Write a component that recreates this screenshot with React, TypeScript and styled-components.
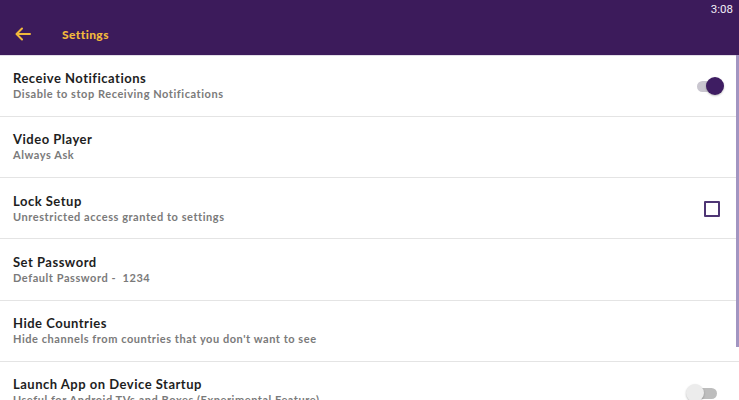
import React from "react"
import styled, { createGlobalStyle } from "styled-components"

const GlobalStyle = createGlobalStyle`
  html, body {
    margin: 0;
    padding: 0;
    background: #ffffff;
    font-family: "Lato", "Noto Sans", sans-serif;
  }
  #root {
    width: 739px;
    height: 400px;
    overflow: hidden;
  }
`

const Screen = styled.div`
  position: relative;
  width: 739px;
  height: 400px;
  overflow: hidden;
  background: #ffffff;
`

const AppBar = styled.header`
  height: 55.5px;
  background: #3c1b5b;
  display: flex;
  flex-direction: column;
  box-sizing: border-box;
  border-bottom: 1px solid #e2dde8;
`

const StatusBar = styled.div`
  height: 18px;
  display: flex;
  justify-content: flex-end;
  align-items: center;
  padding-right: 6px;
  color: #f2eef7;
  font-size: 11.5px;
  font-family: "Roboto", sans-serif;
`

const TitleBar = styled.div`
  flex: 1;
  display: flex;
  align-items: center;
  padding-left: 15px;
  gap: 17px;
  padding-bottom: 4px;
`

const BackButton = styled.span`
  display: flex;
  align-items: center;
  width: 30px;
`

const Title = styled.h1`
  margin: 0;
  color: #f2b93b;
  font-size: 12px;
  font-weight: 900;
  letter-spacing: 0.4px;
`

const List = styled.div`
  display: flex;
  flex-direction: column;
`

const Row = styled.div`
  height: 61.25px;
  flex-shrink: 0;
  box-sizing: border-box;
  border-bottom: 1px solid #e4e4e4;
  display: flex;
  align-items: center;
  padding: 1px 16px 0 13px;
`

const Texts = styled.div`
  flex: 1;
  display: flex;
  flex-direction: column;
`

const RowTitle = styled.div`
  color: #1e1e1e;
  font-size: 13px;
  font-weight: 700;
  line-height: 16px;
  letter-spacing: 0.5px;
  white-space: nowrap;
`

const RowSub = styled.div`
  color: #7a7a7a;
  font-size: 11px;
  font-weight: 700;
  line-height: 16px;
  letter-spacing: 0.55px;
  white-space: pre;
`

const Track = styled.div<{ $on: boolean }>`
  position: relative;
  width: 24px;
  height: 11px;
  border-radius: 6px;
  background: ${(p) => (p.$on ? "#c9c6cf" : "#bdbdbd")};
  margin-right: ${(p) => (p.$on ? "2px" : "6px")};
  margin-top: ${(p) => (p.$on ? "0" : "3px")};
`

const Thumb = styled.div<{ $on: boolean }>`
  position: absolute;
  top: -4px;
  ${(p) => (p.$on ? "right: -3px;" : "left: -7px;")}
  width: 18px;
  height: 18px;
  border-radius: 50%;
  background: ${(p) => (p.$on ? "#3e1d62" : "#ececec")};
  box-shadow: 0 1px 2px rgba(0, 0, 0, 0.25);
`

const CheckBox = styled.div`
  width: 12px;
  height: 12px;
  border: 2px solid #4e3574;
  border-radius: 1px;
  margin-right: 3px;
`

const ScrollBar = styled.div`
  position: absolute;
  right: 0;
  top: 55px;
  width: 3px;
  height: 292px;
  background: #a295c1;
`

function Toggle({ on }: { on: boolean }) {
  return (
    <Track $on={on}>
      <Thumb $on={on} />
    </Track>
  )
}

type Item = {
  title: string
  sub: string
  control?: "on" | "off" | "check"
}

const items: Item[] = [
  { title: "Receive Notifications", sub: "Disable to stop Receiving Notifications", control: "on" },
  { title: "Video Player", sub: "Always Ask" },
  { title: "Lock Setup", sub: "Unrestricted access granted to settings", control: "check" },
  { title: "Set Password", sub: "Default Password -  1234" },
  { title: "Hide Countries", sub: "Hide channels from countries that you don't want to see" },
  { title: "Launch App on Device Startup", sub: "Useful for Android TVs and Boxes (Experimental Feature)", control: "off" },
]

export default function App() {
  return (
    <Screen>
      <GlobalStyle />
      <AppBar>
        <StatusBar>3:08</StatusBar>
        <TitleBar>
          <BackButton>
            <svg width="16" height="14" viewBox="0 0 16 14" fill="none">
              <path d="M15 7H2M7 1.5L1.5 7 7 12.5" stroke="#f2b93b" strokeWidth="2" strokeLinecap="round" strokeLinejoin="round" />
            </svg>
          </BackButton>
          <Title>Settings</Title>
        </TitleBar>
      </AppBar>
      <List>
        {items.map((it) => (
          <Row key={it.title}>
            <Texts>
              <RowTitle>{it.title}</RowTitle>
              <RowSub>{it.sub}</RowSub>
            </Texts>
            {it.control === "on" && <Toggle on />}
            {it.control === "off" && <Toggle on={false} />}
            {it.control === "check" && <CheckBox />}
          </Row>
        ))}
      </List>
      <ScrollBar />
    </Screen>
  )
}
